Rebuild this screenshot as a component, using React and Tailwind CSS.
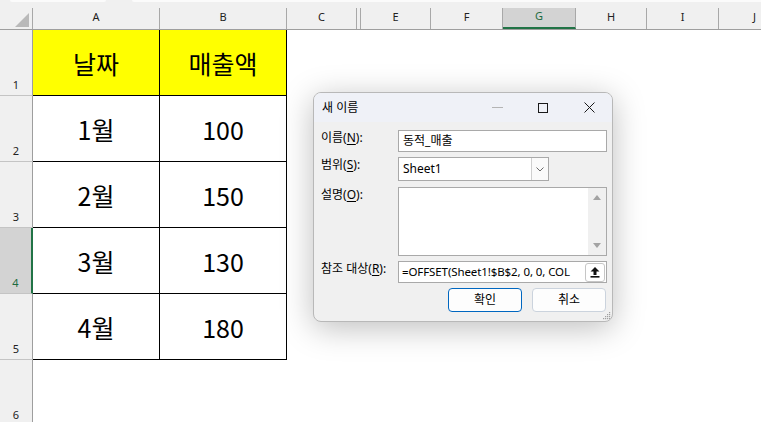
import React from 'react';

const columns = [
  { key: 'A', cls: 'w-[127px]' },
  { key: 'B', cls: 'w-[127px]' },
  { key: 'C', cls: 'w-[70px]' },
  { key: '', cls: 'w-[4px]' },
  { key: 'E', cls: 'w-[70px]' },
  { key: 'F', cls: 'w-[72px]' },
  { key: 'G', cls: 'w-[73px]', selected: true },
  { key: 'H', cls: 'w-[71px]' },
  { key: 'I', cls: 'w-[72px]' },
  { key: 'J', cls: 'w-[72px]' },
];

const rows = [
  { n: 1, a: '날짜', b: '매출액', head: true },
  { n: 2, a: '1월', b: '100' },
  { n: 3, a: '2월', b: '150' },
  { n: 4, a: '3월', b: '130', selected: true },
  { n: 5, a: '4월', b: '180' },
];

const uiFont = "font-['Noto_Sans','Noto_Sans_CJK_KR',sans-serif]";
const cellFont = "font-['Noto_Sans_CJK_KR',sans-serif]";

function Underlined({ text, u }) {
  const [before, after] = text.split(u);
  return (
    <span>
      {before}
      <span className="underline underline-offset-2">{u}</span>
      {after}
    </span>
  );
}

function ColumnHeader() {
  return (
    <div className="flex h-[22px] border-b border-[#9e9e9e] bg-[#f0f0f0]">
      <div className="flex w-[33px] shrink-0 items-end justify-end border-r border-[#a8a8a8] pb-[2px] pr-[3px]">
        <svg width="14" height="14" viewBox="0 0 14 14">
          <polygon points="14,0 14,14 0,14" fill="#b9b9b9" />
        </svg>
      </div>
      {columns.map((col, i) => (
        <div
          key={i}
          className={
            col.selected
              ? `${col.cls} shrink-0 flex items-center justify-center border-r border-[#a8a8a8] bg-[#d3d3d3] border-b-2 border-b-[#217346] pb-[2px] text-[11px] text-[#1d6b40]`
              : `${col.cls} shrink-0 flex items-center justify-center border-r border-[#a8a8a8] pb-[3px] text-[11px] text-[#222]`
          }
        >
          {col.key}
        </div>
      ))}
    </div>
  );
}

function RowHeader({ n, selected }) {
  return (
    <div
      className={
        selected
          ? 'flex w-[33px] shrink-0 items-end justify-center border-b border-r-2 border-b-[#c4c4c4] border-r-[#217346] bg-[#d3d3d3] pb-[2px] text-[11px] text-[#1d6b40]'
          : 'flex w-[33px] shrink-0 items-end justify-center border-b border-r border-b-[#c4c4c4] border-r-[#9e9e9e] bg-[#f0f0f0] pb-[2px] text-[11px] text-[#222]'
      }
    >
      {n}
    </div>
  );
}

function Sheet() {
  return (
    <div className={`${uiFont} flex flex-col`}>
      <div className="flex h-[8px] bg-[#f0f0f0]">
        <div className="ml-[10px] h-[2px] w-[96px] rounded-b-[2px] bg-[#fbfbfb]" />
        <div className="ml-[26px] h-[2px] flex-1 rounded-bl-[2px] bg-[#fbfbfb]" />
      </div>
      <ColumnHeader />
      {rows.map((r) => (
        <div key={r.n} className="flex h-[66px]">
          <RowHeader n={r.n} selected={r.selected} />
          <div
            className={`${cellFont} flex w-[127px] shrink-0 items-center justify-center border-b border-r border-black pt-[2px] text-[25px] text-black ${
              r.head ? 'bg-[#ffff00]' : 'bg-white'
            }`}
          >
            {r.a}
          </div>
          <div
            className={`${cellFont} flex w-[127px] shrink-0 items-center justify-center border-b border-r border-black pt-[2px] text-[25px] text-black ${
              r.head ? 'bg-[#ffff00]' : 'bg-white'
            }`}
          >
            {r.b}
          </div>
          <div className="flex-1 bg-white" />
        </div>
      ))}
      <div className="flex h-[66px]">
        <RowHeader n={6} />
        <div className="flex-1 bg-white" />
      </div>
    </div>
  );
}

function Dialog() {
  return (
    <div
      className={`${uiFont} absolute left-[313px] top-[92px] flex h-[230px] w-[300px] flex-col overflow-hidden rounded-[8px] border border-[#b8b8b8] bg-[#f0f0f0] text-[12px] text-black shadow-[0_6px_32px_rgba(0,0,0,0.26)]`}
    >
      <div className="flex h-[29px] shrink-0 items-center bg-[#eff1f7]">
        <span className="pl-[8px] leading-[16px]">새 이름</span>
        <div className="ml-auto flex h-full">
          <div className="flex w-[46px] items-center justify-center">
            <div className="h-px w-[11px] bg-[#b4b4b4]" />
          </div>
          <div className="flex w-[46px] items-center justify-center">
            <div className="h-[10px] w-[10px] border border-[#1a1a1a]" />
          </div>
          <div className="flex w-[46px] items-center justify-center">
            <svg width="11" height="11" viewBox="0 0 11 11">
              <path d="M0.5 0.5 L10.5 10.5 M10.5 0.5 L0.5 10.5" stroke="#1a1a1a" strokeWidth="1" />
            </svg>
          </div>
        </div>
      </div>

      <div className="flex flex-col pl-[7px]">
        <div className="mt-[8px] flex">
          <div className="w-[77px] leading-[16px]">
            <Underlined text="이름(N):" u="N" />
          </div>
          <div className="flex h-[22px] w-[209px] items-center border border-[#a9a9a9] bg-white pl-[4px]">
            동적_매출
          </div>
        </div>

        <div className="mt-[5px] flex">
          <div className="w-[77px] leading-[16px]">
            <Underlined text="범위(S):" u="S" />
          </div>
          <div className="flex h-[24px] w-[151px] border border-[#a9a9a9] bg-white">
            <div className="flex flex-1 items-center pl-[4px]">Sheet1</div>
            <div className="flex w-[17px] items-center justify-center border-l border-[#cfcfcf] bg-[#fafafa]">
              <svg width="8" height="5" viewBox="0 0 8 5">
                <path d="M0.5 0.5 L4 4 L7.5 0.5" fill="none" stroke="#6a6a6a" strokeWidth="1" />
              </svg>
            </div>
          </div>
        </div>

        <div className="mt-[6px] flex">
          <div className="w-[77px] leading-[16px]">
            <Underlined text="설명(O):" u="O" />
          </div>
          <div className="flex h-[69px] w-[209px] justify-end border border-[#a9a9a9] bg-white">
            <div className="flex w-[18px] flex-col items-center justify-between bg-[#f0f0f0] py-[7px]">
              <svg width="8" height="5" viewBox="0 0 8 5">
                <polygon points="4,0 8,5 0,5" fill="#a3a3a3" />
              </svg>
              <svg width="8" height="5" viewBox="0 0 8 5">
                <polygon points="0,0 8,0 4,5" fill="#a3a3a3" />
              </svg>
            </div>
          </div>
        </div>

        <div className="mt-[5px] flex">
          <div className="w-[77px] leading-[16px]">
            <Underlined text="참조 대상(R):" u="R" />
          </div>
          <div className="flex h-[22px] w-[209px] items-center border border-[#a9a9a9] bg-white">
            <div className="flex-1 overflow-hidden whitespace-nowrap pl-[3px] text-[11.5px] tracking-[-0.1px]">
              =OFFSET(Sheet1!$B$2, 0, 0, COL
            </div>
            <div className="mr-px flex h-[19px] w-[20px] shrink-0 items-center justify-center rounded-[3px] border border-[#c6c6c6] bg-white">
              <svg width="10" height="11" viewBox="0 0 10 11">
                <polygon points="5,0 9.5,4.5 6.5,4.5 6.5,8 3.5,8 3.5,4.5 0.5,4.5" fill="#111" />
                <rect x="0.5" y="9" width="9" height="1.6" fill="#111" />
              </svg>
            </div>
          </div>
        </div>

        <div className="mt-[5px] flex justify-end gap-[10px] pr-[6px]">
          <div className="flex h-[24px] w-[74px] items-center justify-center rounded-[4px] border border-[#0067c0] bg-[#fdfdfd]">
            확인
          </div>
          <div className="flex h-[24px] w-[74px] items-center justify-center rounded-[4px] border border-[#cbd3dd] bg-[#fdfdfd]">
            취소
          </div>
        </div>
      </div>

      <svg className="absolute bottom-[1px] right-[1px]" width="9" height="9" viewBox="0 0 9 9">
        <rect x="7" y="1" width="1.2" height="1.2" fill="#a0a0a0" />
        <rect x="5" y="3" width="1.2" height="1.2" fill="#a0a0a0" />
        <rect x="7" y="3" width="1.2" height="1.2" fill="#a0a0a0" />
        <rect x="3" y="5" width="1.2" height="1.2" fill="#a0a0a0" />
        <rect x="5" y="5" width="1.2" height="1.2" fill="#a0a0a0" />
        <rect x="7" y="5" width="1.2" height="1.2" fill="#a0a0a0" />
        <rect x="1" y="7" width="1.2" height="1.2" fill="#a0a0a0" />
        <rect x="3" y="7" width="1.2" height="1.2" fill="#a0a0a0" />
        <rect x="5" y="7" width="1.2" height="1.2" fill="#a0a0a0" />
        <rect x="7" y="7" width="1.2" height="1.2" fill="#a0a0a0" />
      </svg>
    </div>
  );
}

export default function App() {
  return (
    <div className="relative h-[422px] w-[761px] overflow-hidden bg-white">
      <Sheet />
      <Dialog />
    </div>
  );
}
